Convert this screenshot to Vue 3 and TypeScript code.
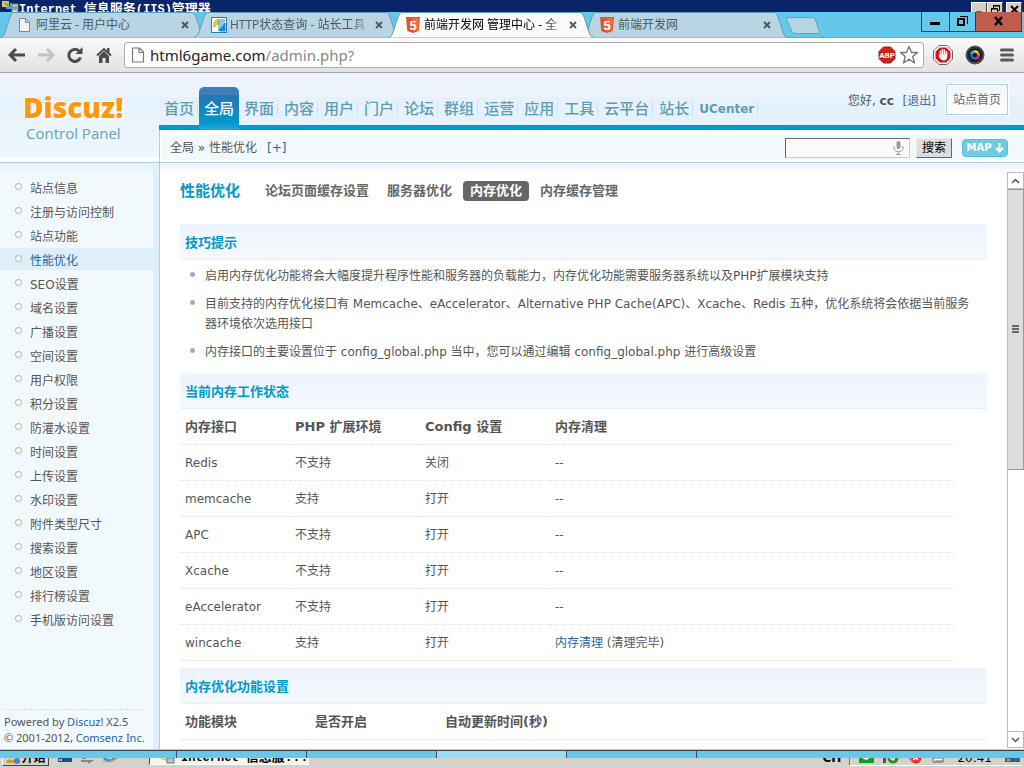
<script setup lang="ts">
import { ref } from 'vue'

interface BrowserTab {
  title: string
  icon: 'page' | 'tool' | 'html'
  active?: boolean
  fade?: boolean
}

const browserTabs: BrowserTab[] = [
  { title: '阿里云 - 用户中心', icon: 'page' },
  { title: 'HTTP状态查询 - 站长工具', icon: 'tool', fade: true },
  { title: '前端开发网 管理中心 - 全', icon: 'html', active: true, fade: true },
  { title: '前端开发网', icon: 'html' },
]

const nav: string[] = ['首页', '全局', '界面', '内容', '用户', '门户', '论坛', '群组', '运营', '应用', '工具', '云平台', '站长', 'UCenter']
const activeNav = ref('全局')

const menu: string[] = [
  '站点信息', '注册与访问控制', '站点功能', '性能优化', 'SEO设置', '域名设置', '广播设置', '空间设置', '用户权限', '积分设置',
  '防灌水设置', '时间设置', '上传设置', '水印设置', '附件类型尺寸', '搜索设置', '地区设置', '排行榜设置', '手机版访问设置',
]
const activeMenu = ref('性能优化')

const subTabs: string[] = ['论坛页面缓存设置', '服务器优化', '内存优化', '内存缓存管理']
const activeSub = ref('内存优化')

const tips: string[] = [
  '启用内存优化功能将会大幅度提升程序性能和服务器的负载能力，内存优化功能需要服务器系统以及PHP扩展模块支持',
  '目前支持的内存优化接口有 Memcache、eAccelerator、Alternative PHP Cache(APC)、Xcache、Redis 五种，优化系统将会依据当前服务器环境依次选用接口',
  '内存接口的主要设置位于 config_global.php 当中，您可以通过编辑 config_global.php 进行高级设置',
]

interface CacheRow {
  name: string
  env: string
  config: string
  cleared?: boolean
}

const caches: CacheRow[] = [
  { name: 'Redis', env: '不支持', config: '关闭' },
  { name: 'memcache', env: '支持', config: '打开' },
  { name: 'APC', env: '不支持', config: '打开' },
  { name: 'Xcache', env: '不支持', config: '打开' },
  { name: 'eAccelerator', env: '不支持', config: '打开' },
  { name: 'wincache', env: '支持', config: '打开', cleared: true },
]

const keyword = ref('')
</script>

<template>
  <div class="screen">
    <div class="titlebar">
      <svg class="server" width="18" height="12" viewBox="0 0 18 12">
        <rect x="1" y="1" width="7" height="6" fill="#e9c63a" />
        <path d="M4 3l6 5M10 3v5H5" stroke="#3fa5e8" stroke-width="2" fill="none" />
        <rect x="11" y="4" width="6" height="9" fill="#c9d3cf" stroke="#6c7f86" />
        <path d="M12 7h4M12 9h4" stroke="#5b6b70" />
      </svg>
      <span class="caption">Internet <span class="han">信息服务</span>(IIS)<span class="han">管理器</span></span>
      <div class="classic">
        <button aria-label="最小化"><svg width="14" height="13"><path d="M4 9.500h6" stroke="#000" stroke-width="2" /></svg></button>
        <button aria-label="还原"><svg width="14" height="13"><path d="M5.500 6V2.500h6v5H9M5 3h7M3.500 5.500h6v5h-6zM3 6h7" fill="none" stroke="#000" /></svg></button>
        <button class="gap" aria-label="关闭"><svg width="14" height="13"><path d="M4 3l7 7M11 3l-7 7" stroke="#000" stroke-width="2" /></svg></button>
      </div>
    </div>

    <div class="tabstrip">
      <div v-for="tab in browserTabs" :key="tab.title" class="tab" :class="{ on: tab.active }">
        <svg class="shape" viewBox="0 0 206 26" preserveAspectRatio="none">
          <path d="M0 25.500C3 25 4 23 5 20L10 5C11 2 12 .5 15 .5H191C194 .5 195 2 196 5L201 20C202 23 203 25 206 25.500" />
        </svg>
        <svg v-if="tab.icon === 'page'" class="fav" width="16" height="16" viewBox="0 0 16 16">
          <path d="M2.500 1.500h6.500l3.500 3.500v9.500h-10zM8.500 1.500v4h4" fill="#eef3f6" stroke="#7b8b94" />
        </svg>
        <svg v-else-if="tab.icon === 'tool'" class="fav" width="16" height="16" viewBox="0 0 16 16">
          <rect x=".5" y=".5" width="15" height="15" fill="#fff" stroke="#1f7fc4" />
          <path d="M2 9c0-4 2-7 6-7v6H5v2H2z" fill="#d8c83c" />
          <path d="M8 2v12M8 13l6-7v8H9z" fill="#1f86cc" stroke="#1f86cc" />
          <path d="M9 2h5v3l-5 6z" fill="#8cc6ea" />
        </svg>
        <svg v-else class="fav" width="16" height="16" viewBox="0 0 16 16">
          <path d="M1 0h14l-1.300 14L8 16l-5.700-2z" fill="#e5532d" />
          <path d="M8 1h6l-1.100 12L8 14.800z" fill="#f06c3c" />
          <text x="8" y="12.500" text-anchor="middle" font-family="Liberation Sans" font-weight="700" font-size="13" fill="#fff">5</text>
        </svg>
        <span class="label" :class="{ fade: tab.fade }">{{ tab.title }}</span>
        <button class="close" aria-label="关闭标签"><svg width="8" height="8" viewBox="0 0 8 8"><path d="M1 1l6 6M7 1L1 7" stroke="#4d575c" stroke-width="1.800" /></svg></button>
      </div>
      <button class="newtab" aria-label="新标签页">
        <svg width="34" height="17" viewBox="0 0 34 17"><path d="M1 .5h24c3 0 4 1 5 4l3 9c1 2 0 3-2 3H10c-3 0-4-1-5-4L1 3.500C.5 2 0 .5 2 .5z" fill="#b5d5e3" stroke="#5ba4be" /></svg>
      </button>
      <div class="controls">
        <button aria-label="最小化"><svg width="27" height="19"><path d="M8 11.500h10" stroke="#000" stroke-width="3" /></svg></button>
        <button aria-label="还原"><svg width="25" height="19"><path d="M8 7h6v6H8z" fill="none" stroke="#000" stroke-width="2" /><path d="M10 4.500h7.500V12" fill="none" stroke="#000" /></svg></button>
        <button class="red" aria-label="关闭"><svg width="45" height="19"><path d="M19 5l7 8M26 5l-7 8" stroke="#000" stroke-width="2.500" /></svg></button>
      </div>
    </div>

    <div class="toolbar">
      <button class="tool" aria-label="后退"><svg width="18" height="16" viewBox="0 0 18 16"><path d="M2 8h15M8 2L2 8l6 6" fill="none" stroke="#4b4b4b" stroke-width="3" /></svg></button>
      <button class="tool" aria-label="前进"><svg width="18" height="16" viewBox="0 0 18 16"><path d="M1 8h15M10 2l6 6-6 6" fill="none" stroke="#c3c3c3" stroke-width="3" /></svg></button>
      <button class="tool" aria-label="刷新"><svg width="18" height="16" viewBox="0 0 18 16"><path d="M14.500 10.500A6 6 0 1 1 13 4" fill="none" stroke="#4b4b4b" stroke-width="3" /><path d="M16.500 0v7h-7z" fill="#4b4b4b" /></svg></button>
      <button class="tool" aria-label="主页"><svg width="18" height="16" viewBox="0 0 18 16"><path d="M2 8.500L9 2l7 6.500" fill="none" stroke="#4b4b4b" stroke-width="2" /><path d="M4 9l5-5 5 5v7h-3.500v-5h-3v5H4zM12 1h2.500v5L12 4z" fill="#4b4b4b" /></svg></button>
      <div class="omnibox">
        <svg width="14" height="16" viewBox="0 0 14 16"><path d="M1.500 1h7l4 4v10h-11zM8 1v4.500h4.500" fill="#fff" stroke="#777" stroke-width="1.200" /></svg>
        <div class="url"><span class="host">html6game.com</span><span class="path">/admin.php?</span></div>
        <svg width="18" height="18" viewBox="0 0 18 18">
          <path d="M5.500 1h7L17 5.500v7L12.500 17h-7L1 12.500v-7z" fill="#cf2217" stroke="#9e1a12" />
          <text x="9" y="12" text-anchor="middle" font-family="Roboto" font-weight="700" font-size="8" fill="#fff">ABP</text>
        </svg>
        <svg width="20" height="20" viewBox="0 0 20 20"><path d="M10 1.500l2.500 6h6l-4.800 4 1.800 6.500-5.500-3.800L4.500 18l1.800-6.500-4.800-4h6z" fill="#fff" stroke="#737373" stroke-width="1.300" stroke-linejoin="round" /></svg>
      </div>
      <button class="ext" aria-label="广告拦截"><svg width="20" height="20" viewBox="0 0 20 20">
        <path d="M6 .5h8L19.500 6v8L14 19.500H6L.5 14V6z" fill="#fff" stroke="#666" />
        <path d="M6.800 2.500h6.400l4.300 4.300v6.400l-4.300 4.300H6.800l-4.300-4.300V6.800z" fill="#d11" />
        <path d="M7.500 11V6M9.500 10V4.500M11.500 10V5M13.500 11V7" stroke="#fff" stroke-width="1.500" stroke-linecap="round" />
        <path d="M6.800 9h7.400v3c0 2-1.500 3.500-3.500 3.500S7.500 14.500 5.500 11z" fill="#fff" />
      </svg></button>
      <button class="ext" aria-label="截图"><svg width="20" height="20" viewBox="0 0 20 20">
        <circle cx="10" cy="10" r="9" fill="#333b40" stroke="#555" /><circle cx="10" cy="10" r="6.500" fill="#0b0d0f" />
        <path d="M10 10l-5-1a5 5 0 0 1 4-4z" fill="#26b6d9" /><path d="M10 10L9 5a5 5 0 0 1 5 2z" fill="#cadb35" />
        <path d="M10 10l4-3a5 5 0 0 1 1 4z" fill="#f08a24" /><path d="M10 10l5 1a5 5 0 0 1-5 4z" fill="#c92a80" /><path d="M10 10v5a5 5 0 0 1-5-6z" fill="#3358b8" />
        <circle cx="10" cy="10" r="2" fill="#111" />
      </svg></button>
      <button class="ext menu" aria-label="菜单"><svg width="14" height="14"><path d="M1.500 2h11M1.500 7h11M1.500 12h11" stroke="#5a5a5a" stroke-width="3" stroke-linecap="round" /></svg></button>
    </div>

    <div class="page">
      <header class="header">
        <div class="brand">
          <div class="logo">Discuz!</div>
          <div class="sub">Control Panel</div>
        </div>
        <div class="head">
          <div class="top">
            <nav class="nav">
              <a v-for="item in nav" :key="item" href="#" :class="{ on: item === activeNav, latin: item === 'UCenter' }" @click.prevent="activeNav = item">{{ item }}</a>
            </nav>
            <div class="user">您好, <b>cc</b> <a href="#">[退出]</a></div>
            <a class="home" href="#">站点首页</a>
          </div>
          <div class="crumbs">
            <div class="inner">
              <span>全局 » 性能优化</span><a class="add" href="#">[+]</a>
              <form class="search" @submit.prevent>
                <span class="field">
                  <input v-model="keyword" type="text" aria-label="搜索" />
                  <svg width="11" height="14" viewBox="0 0 11 14"><rect x="3.500" y="0" width="4" height="8" rx="2" fill="#999" /><path d="M1 5v2c0 5 9 5 9 0V5M5.500 11v2.500M3 13.500h5" fill="none" stroke="#999" /></svg>
                </span>
                <button class="go">搜索</button>
                <button class="map" type="button">MAP <svg width="9" height="10" viewBox="0 0 9 10"><path d="M4.500 0v8M1 5l3.500 3.500L8 5" fill="none" stroke="#fff" stroke-width="2" /></svg></button>
              </form>
            </div>
          </div>
        </div>
      </header>

      <div class="body">
        <aside class="side">
          <ul>
            <li v-for="item in menu" :key="item" :class="{ on: item === activeMenu }">
              <a href="#" @click.prevent="activeMenu = item">{{ item }}</a>
            </li>
          </ul>
          <footer>
            Powered by <a href="#">Discuz!</a> X2.5<br />© 2001-2012, <a href="#">Comsenz Inc.</a>
          </footer>
        </aside>

        <main class="content">
          <div class="heading">
            <h3>性能优化</h3>
            <a v-for="t in subTabs" :key="t" href="#" :class="{ on: t === activeSub }" @click.prevent="activeSub = t">{{ t }}</a>
          </div>

          <h4 class="bar">技巧提示</h4>
          <ul class="tips">
            <li v-for="tip in tips" :key="tip">{{ tip }}</li>
          </ul>

          <h4 class="bar">当前内存工作状态</h4>
          <div class="status">
            <table class="grid">
              <thead>
                <tr><th class="c1">内存接口</th><th class="c2">PHP 扩展环境</th><th class="c2">Config 设置</th><th>内存清理</th></tr>
              </thead>
              <tbody>
                <tr v-for="row in caches" :key="row.name">
                  <td>{{ row.name }}</td>
                  <td>{{ row.env }}</td>
                  <td>{{ row.config }}</td>
                  <td><template v-if="row.cleared"><a href="#">内存清理</a> (清理完毕)</template><template v-else>--</template></td>
                </tr>
              </tbody>
            </table>
          </div>

          <h4 class="bar">内存优化功能设置</h4>
          <table class="grid">
            <thead>
              <tr><th class="c2">功能模块</th><th class="c2">是否开启</th><th>自动更新时间(秒)</th></tr>
            </thead>
          </table>
        </main>

        <div class="scroll">
          <button aria-label="向上"><svg width="9" height="6"><path d="M1 5l3.500-3.500L8 5" fill="none" stroke="#555" stroke-width="1.500" /></svg></button>
          <div class="thumb"><i></i><i></i><i></i></div>
          <div class="track"></div>
          <button aria-label="向下"><svg width="9" height="6"><path d="M1 1l3.500 3.500L8 1" fill="none" stroke="#555" stroke-width="1.500" /></svg></button>
        </div>
      </div>
    </div>

    <div class="edge">
      <span class="s1"></span><span></span><span></span><span class="light"></span><span></span><span class="rest"></span>
    </div>

    <div class="taskbar">
      <button class="start"><svg width="16" height="12" viewBox="0 0 16 12"><path d="M1 3q3-3 6-1l7-2-1 5H2z" fill="#dc9a2c" /><circle cx="12" cy="3" r="3" fill="#4b82c4" /></svg>开始</button>
      <svg class="quick" width="64" height="10" viewBox="0 0 64 10">
        <rect x="2" y="0" width="14" height="4" fill="#294c7d" /><path d="M3 2h3" stroke="#5fd0e8" stroke-width="2" />
        <path d="M25 3h10l-3 2M26 0h4" stroke="#85888c" fill="none" stroke-width="2" />
        <path d="M48 0q6 6 12-1" stroke="#3a93cf" stroke-width="3" fill="none" /><path d="M46 3q5 3 16-3" stroke="#dda72f" fill="none" />
      </svg>
      <div class="task"><svg width="18" height="10" viewBox="0 0 18 10"><path d="M0 0l7 1v2z" fill="#d6b43c" /><rect x="8" y="0" width="7" height="5" fill="#b9c7bd" stroke="#62777c" /></svg><span>Internet <span class="han">信息服...</span></span></div>
      <span class="lang">CH</span>
      <div class="tray">
        <svg width="94" height="10" viewBox="0 0 94 10">
          <rect x="8" y="0" width="15" height="5" fill="#149a25" /><path d="M11 0l4 2 4-2" fill="#fff" />
          <path d="M32 0v5h3V0z" fill="#555" /><circle cx="42" cy="0" r="5.500" fill="#22902c" /><path d="M39 0l3 2 3-4" stroke="#fff" stroke-width="1.500" fill="none" />
          <circle cx="65" cy="0" r="5.500" fill="#df3528" /><path d="M62 2l5-4M63-2l4 4" stroke="#fff" stroke-width="1.500" /><path d="M57 0l5 4" stroke="#888" />
          <path d="M82 0h10v4H82zM84 3h8" fill="#fff" stroke="#666" />
        </svg>
        <span>20:41</span>
        <svg width="18" height="10"><rect x="1" y="0" width="15" height="4" fill="#35618f" /><path d="M3 2h3" stroke="#f0a53a" stroke-width="2" /></svg>
      </div>
    </div>
  </div>
</template>

<style>
html, body { margin: 0; height: 100%; }
#app { height: 100%; }
</style>

<style scoped>
* { box-sizing: border-box; }
.screen { height: 100vh; overflow: hidden; display: flex; flex-direction: column; background: #fff; color: #555; font: 12px/20px "DejaVu Sans", "Noto Sans CJK SC", sans-serif; }
button { margin: 0; padding: 0; border: 0; background: none; font: inherit; color: inherit; display: flex; align-items: center; justify-content: center; }
a { text-decoration: none; color: #2366a8; }
ul, h3, h4 { margin: 0; padding: 0; list-style: none; }
svg { flex: none; display: block; }

.titlebar { flex: none; height: 12px; overflow: hidden; display: flex; align-items: flex-start; background: #0a246a; }
.server { margin-left: 1px; }
.caption { font: bold 12px/20px "Liberation Mono", "Noto Sans CJK SC", monospace; color: #fff; white-space: nowrap; }
.han { font-size: 13px; }
.classic { margin: 2px 2px 0 auto; display: flex; }
.classic button { width: 16px; height: 14px; background: #d4d0c8; border: 1px solid #fff; border-right-color: #404040; }
.classic .gap { margin-left: 3px; }

.tabstrip { flex: none; height: 26px; display: flex; background: #64c8ea; border-bottom: 1px solid #6fa9bf; position: relative; }
.tab { position: relative; flex: 0 1 206px; min-width: 0; height: 26px; padding: 0 15px 1px 17px; display: flex; align-items: center; font: 12px/20px "Open Sans", "Noto Sans CJK SC", sans-serif; color: #4a5a62; }
.tab + .tab { margin-left: -12px; }
.tab.on { z-index: 2; color: #000; }
.shape { position: absolute; left: 0; top: 0; width: 100%; height: 26px; fill: #b9d5e3; stroke: #5f9db5; }
.on .shape { fill: #fafafa; }
.fav { position: relative; margin-right: 3px; }
.label { position: relative; flex: 1; min-width: 0; overflow: hidden; white-space: nowrap; }
.fade { -webkit-mask-image: linear-gradient(90deg, #000 85%, transparent); mask-image: linear-gradient(90deg, #000 85%, transparent); }
.close { position: relative; width: 12px; height: 14px; margin-left: 1px; }
.newtab { height: 17px; margin: 5px 0 0 -2px; }
.controls { margin: 0 2px 0 auto; height: 20px; display: flex; border: 1px solid #27404c; border-top: 0; }
.controls button + button { border-left: 1px solid #27404c; }
.controls .red { background: #c25a4e; }

.toolbar { flex: none; height: 35px; padding: 0 10px 0 8px; display: flex; align-items: center; background: linear-gradient(#fafafa, #e2e2e2); border-bottom: 1px solid #a5a5a5; }
.tool { width: 18px; margin-right: 11px; }
.omnibox { flex: 1; height: 26px; margin-right: 9px; padding: 0 4px 0 6px; display: flex; align-items: center; gap: 3px; background: #fff; border: 1px solid #aaa; border-radius: 3px; }
.url { flex: 1; padding-left: 2px; font: 15px/22px "Noto Sans", sans-serif; color: #888; }
.host { color: #222; }
.ext { margin-right: 12px; }
.ext.menu { margin: 0 0 0 3px; }

.page { flex: 1; min-height: 0; display: flex; flex-direction: column; border-bottom: 1px solid #c0ccd2; }
.header { flex: none; height: 90px; display: flex; border-bottom: 1px solid #b5cfd9; }
.brand { width: 159px; height: 89px; padding: 17px 0 0 23px; background: linear-gradient(#edf4fc 24px, #e5f1fb 24px, #eef7fd 84px, #fff 84px); }
.logo { font: 800 28px/34px "Open Sans", sans-serif; color: #ff970f; text-shadow: 1px 1px 0 #fff, -1px -1px 0 #fff, 2px 2px 0 #fff; }
.sub { padding-left: 3px; font: 15px/18px "Open Sans", sans-serif; color: #6ba0b5; }
.head { flex: 1; min-width: 0; }
.top { height: 57px; padding-right: 16px; display: flex; background: linear-gradient(#edf4fc 24px, #e5f1fb 24px, #e5f1fb 52px, #0099cc 52px); }
.nav { margin-top: 14px; display: flex; }
.nav a { height: 43px; padding: 0 5px; font-size: 15px; line-height: 44px; font-weight: 500; color: #5f9cb3; white-space: nowrap; background: linear-gradient(transparent, #c5dfea, transparent) right 1px top 10px / 1px 24px no-repeat; }
.nav a.latin { font-size: 12px; font-weight: bold; }
.nav a.on { color: #fff; border-radius: 5px 5px 0 0; background: linear-gradient(#3f7fb9 8px, #2674b3 8px, #0099cc 36px, #2ba5d3); }
.user { margin: 18px 10px 0 auto; white-space: nowrap; }
.user a { margin-left: 5px; color: #4f6f9a; }
.home { height: 31px; margin-top: 11px; padding: 0 6px; line-height: 31px; color: #666; background: linear-gradient(#f0f7fb, #fff); border: 1px solid #b5cfd9; outline: 1px solid #fff; }
.crumbs { height: 32px; padding: 5px 0 2px 1px; border-left: 1px solid #b5cfd9; }
.inner { height: 25px; padding: 0 16px 0 9px; display: flex; align-items: center; line-height: 22px; background: #f2f9fd; }
.add { margin-left: 10px; }
.search { margin-left: auto; display: flex; align-items: center; }
.field { position: relative; width: 125px; height: 20px; }
.field input { width: 100%; height: 20px; padding: 0 18px 0 3px; background: #fafafa; border: 1px solid #ccc; border-color: #666 #ccc #ccc #666; border-radius: 0; font: inherit; outline: 0; display: block; }
.field svg { position: absolute; right: 6px; top: 3px; }
.go { width: 36px; height: 20px; margin: 0 10px 0 6px; background: #ddd; color: #000; border: 1px solid #eee; border-right-color: #666; border-bottom-color: #666; }
.map { width: 46px; height: 18px; gap: 3px; background: #6fccdf; border: 1px solid #55bdd6; border-radius: 4px; color: #fff; font: bold 10px/16px "DejaVu Sans", sans-serif; }

.body { flex: 1; min-height: 0; display: flex; background: linear-gradient(#e4f2fb, rgba(255, 255, 255, 0) 9px); }
.side { flex: none; width: 160px; display: flex; flex-direction: column; justify-content: space-between; padding-top: 13px; background: linear-gradient(#e4f2fb, rgba(242, 249, 253, 0) 12px), linear-gradient(90deg, #f2f9fd 153px, #deeffa 153px); border-right: 1px solid #b5cfd9; }
.side li { height: 22px; margin: 0 6px 2px 0; padding-left: 15px; display: flex; align-items: center; }
.side li::before { content: ""; width: 5px; height: 5px; margin: 0 8px 1px 0; background: #fff; border: 1px solid #aaa; border-radius: 50%; }
.side li a { padding-top: 3px; color: #555; line-height: 20px; }
.side li.on { background: #deeffa; }
.side li.on a { color: #2366a8; }
.side footer { margin: 0 16px 0 4px; padding: 4px 0 3px; border-top: 1px dashed #d5dde0; font: 11px/16px "Noto Sans", sans-serif; white-space: nowrap; }

.content { flex: 1; min-width: 0; padding: 0 20px; overflow: hidden; }
.heading { height: 56px; margin-bottom: 5px; display: flex; align-items: center; gap: 4px; }
.heading h3 { margin-right: 14px; font-size: 15px; line-height: 20px; color: #09c; }
.heading a { padding: 0 7px; font-size: 13px; font-weight: bold; color: #666; border-radius: 4px; }
.heading a.on { background: #666; color: #fff; }
.bar { height: 36px; padding-left: 5px; font-size: 13px; line-height: 38px; color: #09c; background: linear-gradient(#edf4fd, #f5f9fd); border-bottom: 1px dotted #deeffb; }
.tips { padding: 6px 0 3px; }
.tips li { position: relative; margin-bottom: 8px; padding: 0 12px 0 25px; }
.tips li::before { content: ""; position: absolute; left: 10px; top: 6px; width: 5px; height: 5px; border-radius: 50%; background: #aaa; }
.status { padding-right: 33px; }
.grid { width: 100%; margin-bottom: 7px; border-collapse: separate; border-spacing: 0; table-layout: fixed; }
.grid th, .grid td { height: 36px; padding: 1px 5px 0; text-align: left; border-bottom: 1px dotted #d3e9f8; }
.grid th { font-size: 13px; }
.c1 { width: 110px; }
.c2 { width: 130px; }

.scroll { flex: none; width: 17px; margin: 9px 0 1px; display: flex; flex-direction: column; background: #fff; border-left: 1px solid #bbb; }
.scroll button { flex: none; height: 17px; border: 1px solid #bbb; border-left: 0; }
.thumb { flex: 280; background: #dcdcdc; border: 1px solid #999; border-left: 0; display: flex; flex-direction: column; align-items: center; justify-content: center; gap: 1px; }
.thumb i { width: 7px; height: 2px; background: #666; }
.track { flex: 262; }

.edge { flex: none; height: 8px; display: flex; background: #66c9ea; border-top: 1px solid #3d4347; }
.edge span { width: 130px; border-right: 1px solid #34505e; }
.edge .s1 { width: 177px; }
.edge .light { background: #9cdcf2; }
.edge .rest { flex: 1; border-right: 0; }

.taskbar { flex: none; height: 10px; overflow: hidden; display: flex; align-items: flex-start; background: #d5d1cb; color: #000; line-height: 10px; }
.start { width: 47px; height: 8px; margin-left: 2px; overflow: hidden; align-items: flex-start; border: 1px solid #444; border-top: 0; border-left-color: #fff; font-weight: bold; line-height: 0; }
.quick { margin-left: 7px; }
.task { width: 160px; height: 7px; margin-left: 29px; padding-left: 9px; display: flex; align-items: flex-start; gap: 4px; overflow: hidden; background: #f4f3f1; border: solid #fff; border-width: 0 1px 1px 0; border-left: 1px solid #444; font: bold 12px/0 "Liberation Mono", "Noto Sans CJK SC", monospace; white-space: nowrap; }
.lang { margin-left: auto; line-height: 0; font-weight: bold; height: 10px; }
.tray { height: 8px; margin: 0 2px 0 8px; padding-left: 1px; display: flex; gap: 12px; overflow: hidden; border-left: 1px solid #777; border-bottom: 1px solid #fff; line-height: 0; }
</style>
